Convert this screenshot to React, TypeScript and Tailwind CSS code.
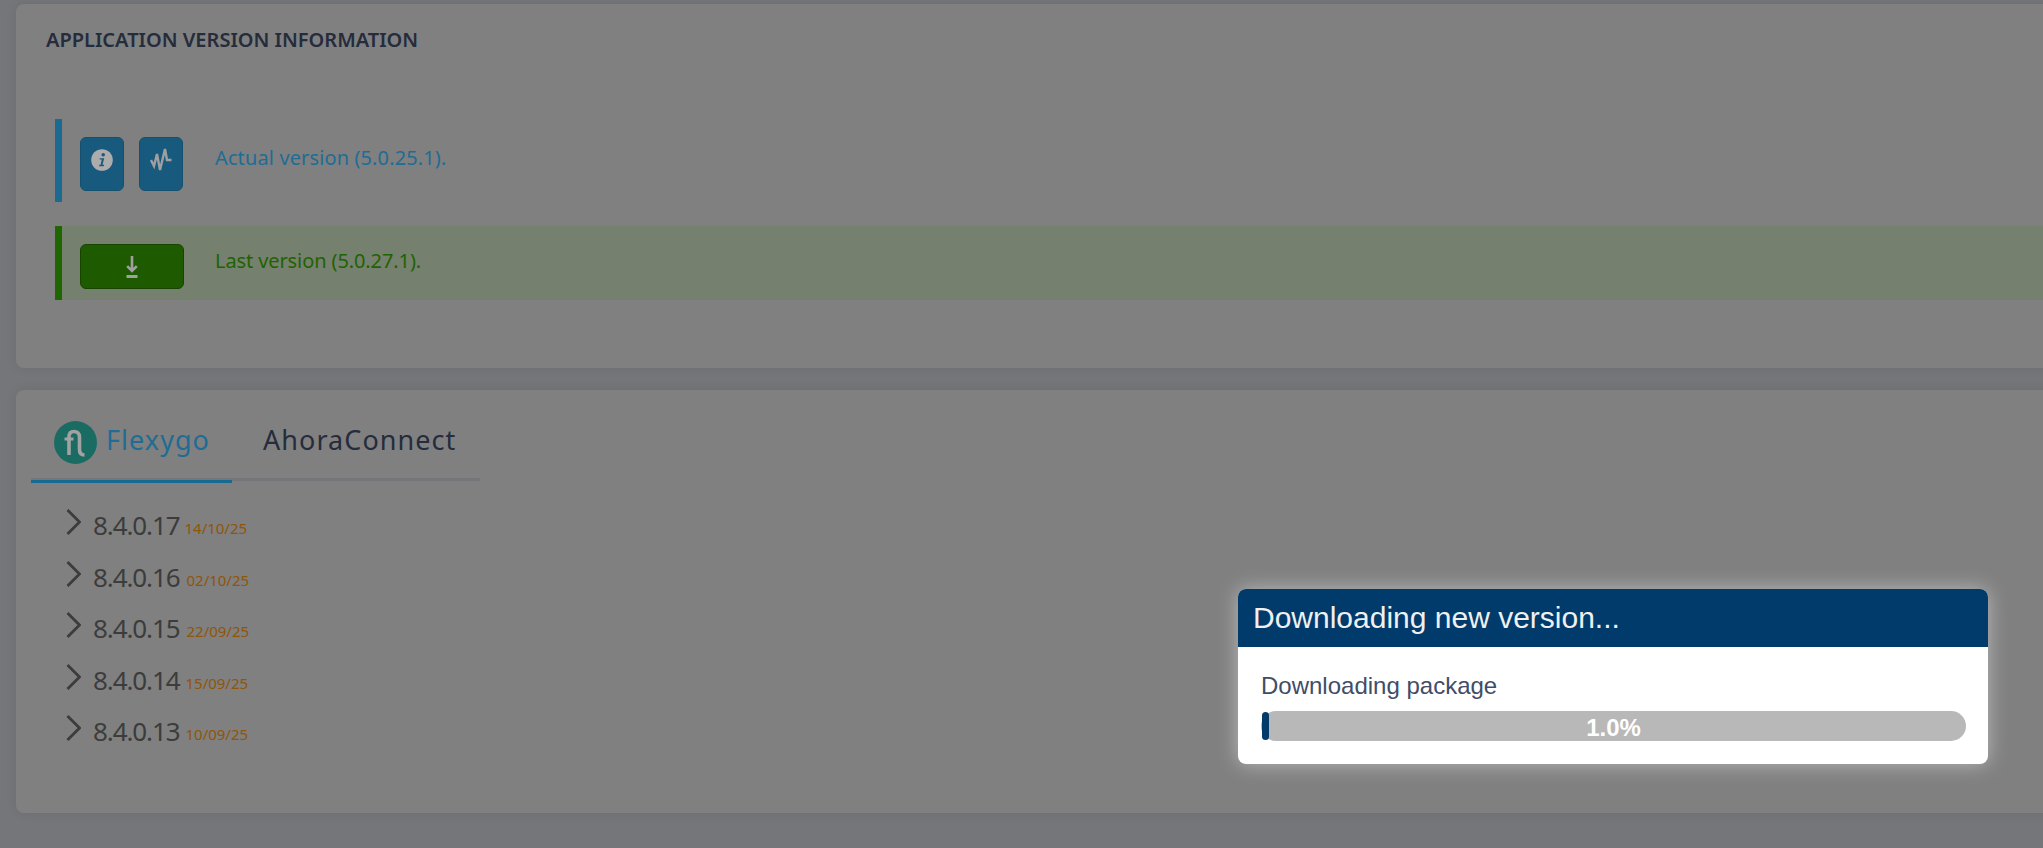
const versions = [
  { version: '8.4.0.17', date: '14/10/25', gap: 'ml-[5px]' },
  { version: '8.4.0.16', date: '02/10/25', gap: 'ml-[7px]' },
  { version: '8.4.0.15', date: '22/09/25', gap: 'ml-[7px]' },
  { version: '8.4.0.14', date: '15/09/25', gap: 'ml-[6px]' },
  { version: '8.4.0.13', date: '10/09/25', gap: 'ml-[6px]' },
];

function InfoIcon() {
  return (
    <svg width="22" height="22" viewBox="0 0 22 22">
      <circle cx="11" cy="11" r="10.8" fill="#acacac" />
      <circle cx="12.2" cy="5.8" r="1.8" fill="#175a7d" />
      <path d="M8.8 9.2h4.4l-1.700 6.600h1.600l-.3 1.400H8.100l.3-1.400h1.200l1.200-5.200H8.500z" fill="#175a7d" />
    </svg>
  );
}

function PulseIcon() {
  return (
    <svg width="22" height="23" viewBox="0 0 22 23" fill="none" stroke="#a0a0a0" strokeWidth="2.400">
      <path d="M1 12l3 6 3-12 3 16 5-21 2 11h4.500" />
    </svg>
  );
}

function DownloadIcon() {
  return (
    <svg width="12" height="22" viewBox="0 0 12 22" fill="none" stroke="#a0a0a0">
      <path d="M6 0v15M1.200 10.200L6 15l4.800-4.800" strokeWidth="2.600" />
      <path d="M.5 20.500h11" strokeWidth="3" />
    </svg>
  );
}

function FlexygoLogo() {
  return (
    <svg width="43" height="43" viewBox="0 0 43 43" fill="none">
      <circle cx="21.500" cy="21.500" r="21.500" fill="#1a6b62" />
      <path d="M15 34V16c0-3.500 2-5.500 5-5.500s5.500 2 5.500 5.500v12.500c0 3.500 1.500 5.500 5 5.500" stroke="#a2a2a2" strokeWidth="3.600" />
      <path d="M10.500 18h9" stroke="#a2a2a2" strokeWidth="3" />
    </svg>
  );
}

function Chevron() {
  return (
    <svg width="15" height="26" viewBox="0 0 15 26" fill="none" stroke="#3c3c3c" strokeWidth="2.800" className="mt-[2px]">
      <path d="M1.500 1l12 12-12 12" />
    </svg>
  );
}

export default function App() {
  return (
    <div className="relative h-[848px] overflow-hidden bg-[#75767a] pl-4 pt-1 font-['Noto_Sans',sans-serif]">
      <section className="-mr-6 h-[364px] rounded-l-lg bg-[#808080] shadow-[0_0_12px_rgba(0,0,0,0.08)]">
        <h2 className="pl-[30px] pt-[21px] text-[20px] leading-[30px] font-semibold text-[#252c3c]">
          APPLICATION VERSION INFORMATION
        </h2>
        <div className="ml-[39px] mt-[64px] flex h-[83px] border-l-[7px] border-[#1a6a92] pl-[18px] pt-[18px]">
          <div className="flex gap-[15px]">
            <button className="flex h-[54px] w-[44px] justify-center rounded-[6px] border border-[#14516f] bg-[#175a7d] pt-[11px]">
              <InfoIcon />
            </button>
            <button className="flex h-[54px] w-[44px] justify-center rounded-[6px] border border-[#14516f] bg-[#175a7d] pt-[10px]">
              <PulseIcon />
            </button>
          </div>
          <p className="ml-[32px] mt-[7px] text-[20px] leading-[27px] tracking-[0.12px] text-[#1f6c95]">Actual version (5.0.25.1).</p>
        </div>
        <div className="ml-[39px] mt-[24px] flex h-[74px] border-l-[7px] border-[#1f6600] bg-[#75806f] pl-[18px] pt-[18px]">
          <button className="flex h-[45px] w-[104px] justify-center rounded-[6px] border border-[#174500] bg-[#1e5a00] pt-[11px]">
            <DownloadIcon />
          </button>
          <p className="ml-[31px] mt-[3px] text-[20px] leading-[27px] tracking-[-0.1px] text-[#1f6300]">Last version (5.0.27.1).</p>
        </div>
      </section>

      <section className="-mr-6 mt-[22px] h-[423px] rounded-l-lg bg-[#808080] pl-[15px] pt-[31px] shadow-[0_0_12px_rgba(0,0,0,0.08)]">
        <div className="flex h-[60px] w-[449px] items-start border-b-[3px] border-[#75767a]">
          <div className="-mb-[2px] flex h-[62px] w-[201px] gap-[9px] border-b-[3px] border-[#176a92] pl-[23px]">
            <FlexygoLogo />
            <span className="-mt-[1px] text-[27px] leading-[40px] tracking-[1.05px] text-[#1f6c95]">Flexygo</span>
          </div>
          <span className="-mt-[1px] ml-[31px] text-[27px] leading-[40px] tracking-[1.05px] text-[#252c3c]">AhoraConnect</span>
        </div>
        <ul className="ml-[35px] mt-[26px]">
          {versions.map((item) => (
            <li key={item.version} className="flex h-[51.5px] items-start">
              <Chevron />
              <span className="ml-[12px] text-[26px] leading-[36px] tracking-[-1.1px] text-[#3c3c3c]">{item.version}</span>
              <span className={`${item.gap} mt-[9px] text-[15px] leading-[24px] text-[#8f5508]`}>{item.date}</span>
            </li>
          ))}
        </ul>
      </section>

      <div className="absolute left-[1238px] top-[589px] w-[750px] overflow-hidden rounded-[8px] bg-white font-['Liberation_Sans',sans-serif] shadow-[0_0_20px_rgba(255,255,255,0.45)]">
        <div className="flex h-[58px] items-center bg-[#003b6b] pb-[2px] pl-[15px] text-[30px] text-[#f0f0f0]">
          Downloading new version...
        </div>
        <div className="pl-[23px] pr-[22px] pt-[23px] pb-[23px]">
          <p className="text-[24px] leading-[32px] text-[#3f4d69]">Downloading package</p>
          <div className="relative mt-[9px] h-[30px] rounded-full bg-[#b8b8b8] text-center text-[24px] leading-[34px] font-bold text-white">
            <div className="absolute left-[1px] top-[1px] h-[28px] w-[7px] rounded-full bg-[#003b6b]" />
            1.0%
          </div>
        </div>
      </div>
    </div>
  );
}
